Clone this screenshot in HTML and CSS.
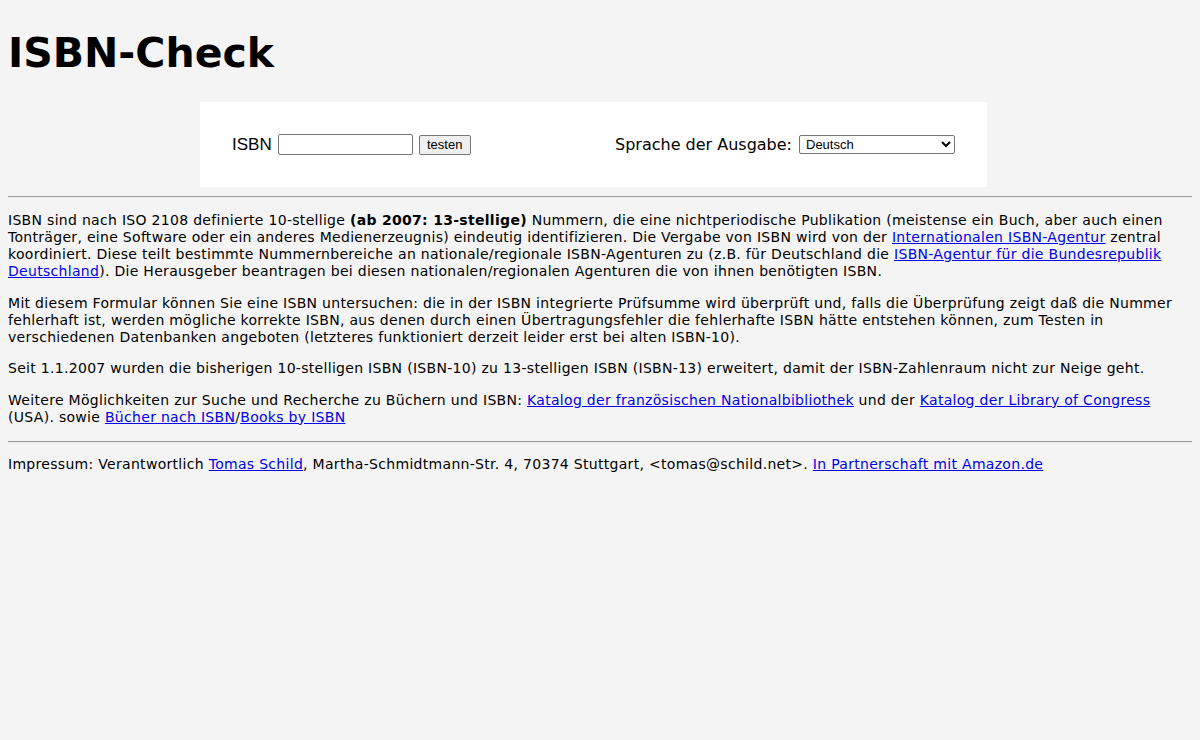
FILE: index.html
```html
<!DOCTYPE html>
<html lang="de">
<head>
<meta charset="utf-8">
<title>ISBN-Check</title>
<link rel="stylesheet" href="styles.css">
</head>
<body>
<h1 class="title">ISBN-Check</h1>
<form class="check-form">
  <div class="field-group">
    <label class="label-isbn" for="isbn">ISBN</label>
    <input class="isbn-input" id="isbn" type="text">
    <button class="btn" type="button">testen</button>
  </div>
  <div class="field-group">
    <label class="label-lang" for="lang">Sprache der Ausgabe:</label>
    <select class="lang-select" id="lang">
      <option>Deutsch</option>
    </select>
  </div>
</form>
<hr class="rule rule-top">
<p class="text">ISBN sind nach ISO 2108 definierte 10-stellige <b>(ab 2007: 13-stellige)</b> Nummern, die eine nichtperiodische Publikation (meistense ein Buch, aber auch einen Tonträger, eine Software oder ein anderes Medienerzeugnis) eindeutig identifizieren. Die Vergabe von ISBN wird von der <a href="#">Internationalen ISBN-Agentur</a> zentral koordiniert. Diese teilt bestimmte Nummernbereiche an nationale/regionale ISBN-Agenturen zu (z.B. für Deutschland die <a href="#">ISBN-Agentur für die Bundesrepublik Deutschland</a>). Die Herausgeber beantragen bei diesen nationalen/regionalen Agenturen die von ihnen benötigten ISBN.</p>
<p class="text">Mit diesem Formular können Sie eine ISBN untersuchen: die in der ISBN integrierte Prüfsumme wird überprüft und, falls die Überprüfung zeigt daß die Nummer fehlerhaft ist, werden mögliche korrekte ISBN, aus denen durch einen Übertragungsfehler die fehlerhafte ISBN hätte entstehen können, zum Testen in verschiedenen Datenbanken angeboten (letzteres funktioniert derzeit leider erst bei alten ISBN-10).</p>
<p class="text">Seit 1.1.2007 wurden die bisherigen 10-stelligen ISBN (ISBN-10) zu 13-stelligen ISBN (ISBN-13) erweitert, damit der ISBN-Zahlenraum nicht zur Neige geht.</p>
<p class="text">Weitere Möglichkeiten zur Suche und Recherche zu Büchern und ISBN: <a href="#">Katalog der französischen Nationalbibliothek</a> und der <a href="#">Katalog der Library of Congress</a> (USA). sowie <a href="#">Bücher nach ISBN</a>/<a href="#">Books by ISBN</a></p>
<hr class="rule rule-bottom">
<p class="text text-footer">Impressum: Verantwortlich <a href="#">Tomas Schild</a>, Martha-Schmidtmann-Str. 4, 70374 Stuttgart, &lt;tomas@schild.net&gt;. <a href="#">In Partnerschaft mit Amazon.de</a></p>
</body>
</html>
```

FILE: styles.css
```css
html {
  background: #f4f4f4;
}

body {
  margin: 0;
  padding: 0 8px;
  background: #f4f4f4;
  color: #000;
  font-family: "DejaVu Sans", Verdana, sans-serif;
  font-size: 14px;
  line-height: 17px;
}

.title {
  margin: 29px 0 24px;
  font-family: "DejaVu Sans", Verdana, sans-serif;
  font-size: 41px;
  line-height: 49px;
  font-weight: bold;
}

.check-form {
  display: flex;
  justify-content: space-between;
  align-items: center;
  box-sizing: border-box;
  width: 787px;
  height: 85px;
  margin: 0 0 0 192px;
  padding: 0 32px 0 32px;
  background: #fff;
}

.field-group {
  display: flex;
  align-items: center;
}

.label-isbn {
  font-family: "Liberation Sans", Arial, sans-serif;
  font-size: 17px;
  margin-right: 6px;
}

.label-lang {
  font-family: "DejaVu Sans", Verdana, sans-serif;
  font-size: 16px;
  margin-right: 7px;
}

.isbn-input {
  box-sizing: border-box;
  width: 135px;
  height: 21px;
  margin: 0 6px 0 0;
  padding: 1px 2px;
  border: 1px solid #767676;
  border-radius: 2px;
  background: #fff;
  font-family: "Liberation Sans", Arial, sans-serif;
  font-size: 13px;
}

.btn {
  box-sizing: border-box;
  width: 52px;
  height: 20px;
  margin: 0;
  padding: 0 6px;
  border: 1px solid #767676;
  border-radius: 2px;
  background: #efefef;
  color: #000;
  font-family: "Liberation Sans", Arial, sans-serif;
  font-size: 13px;
  line-height: 16px;
}

.lang-select {
  box-sizing: border-box;
  width: 156px;
  height: 19px;
  margin: 0;
  padding: 0 0 0 2px;
  border: 1px solid #767676;
  border-radius: 2px;
  background: #fff;
  color: #000;
  font-family: "Liberation Sans", Arial, sans-serif;
  font-size: 13px;
}

.rule {
  height: 0;
  margin: 14px 0;
  border: 0;
  border-top: 1px solid #9a9a9a;
  border-bottom: 1px solid #ececec;
}

.rule-top {
  margin-top: 9px;
}

.rule-bottom {
  margin: 15.5px 0 13px;
}

.text {
  margin: 14.5px 0;
  letter-spacing: 0.3px;
}

.text:first-of-type {
  margin-top: 14px;
}

.text-footer {
  margin-top: 13px;
}

a {
  color: #0000ee;
  text-decoration: underline;
}
```
